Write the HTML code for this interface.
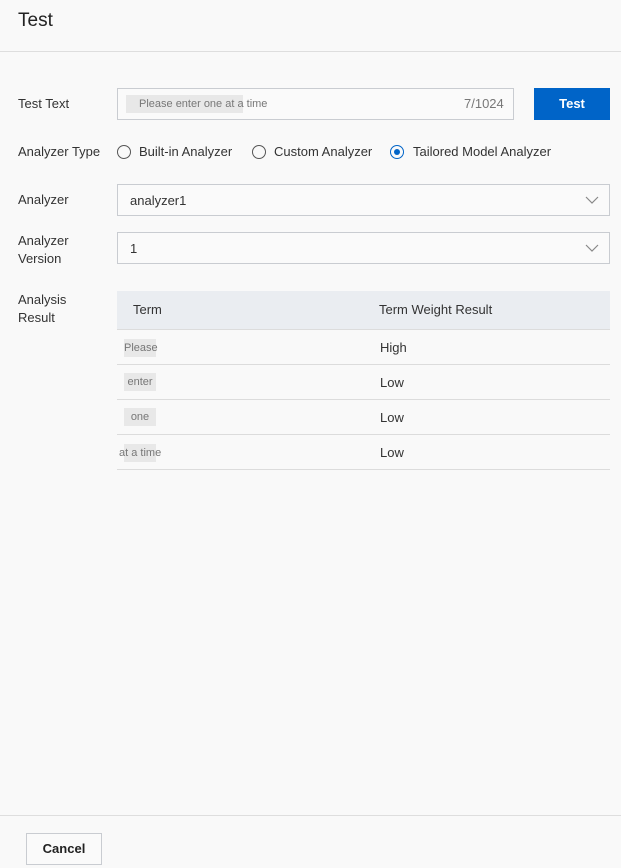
<!DOCTYPE html>
<html><head><meta charset="utf-8"><style>
*{box-sizing:border-box;margin:0;padding:0}
body{width:621px;height:868px;background:#f9f9f9;font-family:"Liberation Sans",sans-serif;color:#333;font-size:13px;position:relative;overflow:hidden}
.a{position:absolute}
.lbl{position:absolute;left:18px;color:#333;font-size:13px;line-height:18px}
.box{position:absolute;border:1px solid #c9ccd1;background:#fafafa}
.radio{position:absolute;width:14px;height:14px;border:1px solid #555;border-radius:50%;top:145px}
.chev{position:absolute;right:10px;top:9px}
.row{position:absolute;left:117px;width:493px;height:35px;border-bottom:1px solid #dcdcdc}
.gray{position:absolute;background:#e8e8e8;color:#777;font-size:11px;line-height:18px;white-space:nowrap}
</style></head><body>
<div class="a" style="left:18px;top:10px;font-size:19px;color:#222">Test</div>
<div class="a" style="left:0;top:51px;width:621px;height:1px;background:#dedede"></div>

<div class="lbl" style="top:95px">Test Text</div>
<div class="box" style="left:117px;top:88px;width:397px;height:32px"></div>
<div class="gray" style="left:126px;top:95px;width:117px;padding-left:13px;overflow:visible">Please enter one at a time</div>
<div class="a" style="left:464px;top:95px;color:#777;line-height:18px">7/1024</div>
<div class="a" style="left:534px;top:88px;width:76px;height:32px;background:#0064c8;color:#fff;font-weight:bold;text-align:center;line-height:32px">Test</div>

<div class="lbl" style="top:143px">Analyzer Type</div>
<div class="radio" style="left:117px"></div>
<div class="a" style="left:139px;top:143px;line-height:18px">Built-in Analyzer</div>
<div class="radio" style="left:252px"></div>
<div class="a" style="left:274px;top:143px;line-height:18px">Custom Analyzer</div>
<div class="radio" style="left:390px;border-color:#0064c8"><div style="position:absolute;left:3px;top:3px;width:6px;height:6px;border-radius:50%;background:#0064c8"></div></div>
<div class="a" style="left:413px;top:143px;line-height:18px">Tailored Model Analyzer</div>

<div class="lbl" style="top:191px">Analyzer</div>
<div class="box" style="left:117px;top:184px;width:493px;height:32px"><div class="a" style="left:12px;top:7px;line-height:18px">analyzer1</div>
<svg class="chev" width="14" height="12" viewBox="0 0 14 12"><path d="M1 3l6 6 6-6" fill="none" stroke="#888" stroke-width="1.2"/></svg></div>

<div class="lbl" style="top:232px">Analyzer<br>Version</div>
<div class="box" style="left:117px;top:232px;width:493px;height:32px"><div class="a" style="left:12px;top:7px;line-height:18px">1</div>
<svg class="chev" width="14" height="12" viewBox="0 0 14 12"><path d="M1 3l6 6 6-6" fill="none" stroke="#888" stroke-width="1.2"/></svg></div>

<div class="lbl" style="top:291px">Analysis<br>Result</div>
<div class="a" style="left:117px;top:291px;width:493px;height:39px;background:#eaedf1;border-bottom:1px solid #dcdcdc"></div>
<div class="a" style="left:133px;top:301px;line-height:18px">Term</div>
<div class="a" style="left:379px;top:301px;line-height:18px">Term Weight Result</div>
<div class="row" style="top:330px"></div>
<div class="row" style="top:365px"></div>
<div class="row" style="top:400px"></div>
<div class="row" style="top:435px"></div>
<div class="gray" style="left:124px;top:339px;width:32px;text-align:center">Please</div>
<div class="gray" style="left:124px;top:373px;width:32px;text-align:center">enter</div>
<div class="gray" style="left:124px;top:408px;width:32px;text-align:center">one</div>
<div class="gray" style="left:119px;top:444px;width:37px;text-align:left;background:linear-gradient(90deg,transparent 5px,#e8e8e8 5px)">at a time</div>
<div class="a" style="left:380px;top:339px;line-height:18px">High</div>
<div class="a" style="left:380px;top:374px;line-height:18px">Low</div>
<div class="a" style="left:380px;top:409px;line-height:18px">Low</div>
<div class="a" style="left:380px;top:444px;line-height:18px">Low</div>

<div class="a" style="left:0;top:815px;width:621px;height:1px;background:#dedede"></div>
<div class="a" style="left:26px;top:833px;width:76px;height:32px;border:1px solid #c9ccd1;background:#fafafa;text-align:center;line-height:30px;font-weight:bold;color:#222">Cancel</div>
</body></html>
